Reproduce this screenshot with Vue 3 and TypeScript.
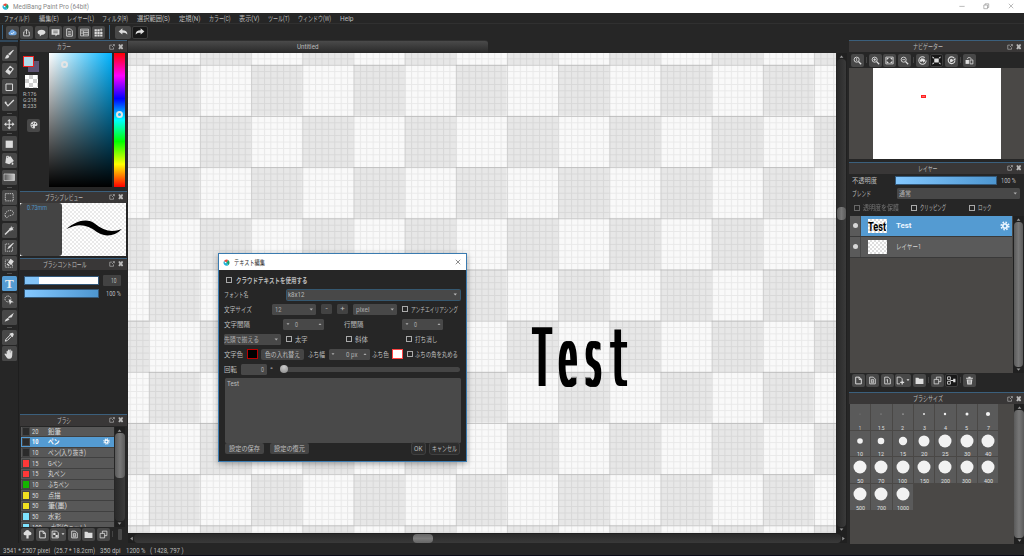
<script setup lang="ts">
import { h } from 'vue'

/* Text fitted to a given width, as in the condensed UI face of the program */
const Lab = (p: { t: string; w: number | string; s?: number | string; b?: boolean | string }) => {
  const s = Number(p.s ?? 7.4)
  const bold = p.b === '' || p.b === true
  return h('svg', { width: p.w, height: 9, style: 'overflow:visible;display:block;flex:none' }, [
    h('text', {
      x: 0, y: 4.5 + s * 0.37, 'font-size': s, 'font-weight': bold ? 700 : 400, fill: 'currentColor',
      textLength: p.w, lengthAdjust: 'spacingAndGlyphs',
    }, p.t),
  ])
}
Lab.props = ['t', 'w', 's', 'b']

const S = 'fill="none" stroke="currentColor"'
const icons: Record<string, string> = {
  cloud: '<path fill="#6fa5e0" d="M4 13a3.500 3.500 0 0 1-.5-6.900 4.500 4.500 0 0 1 8.500-.6A3.800 3.800 0 0 1 12.500 13z"/><path d="M5.500 9l2 2 3.500-4" fill="none" stroke="#fff" stroke-width="1.500"/>',
  share: `<path ${S} stroke-width="1.500" d="M5 7H3v7h10V7h-2M8 11V2M5 5l3-3 3 3"/>`,
  bubble: '<path d="M8 3c4 0 7 1.800 7 4.400S12 12 8.500 12L5 15v-3.500C2.500 11 1 9.500 1 7.500 1 4.800 4 3 8 3z"/>',
  chat: '<path d="M1 2h14v10h-4l-3 3v-3H1z"/><path d="M4 5.500h8M4 8.500h8" stroke="#444" stroke-width="1.200"/>',
  doc: `<path ${S} stroke-width="1.600" d="M3 1.500h6.500L13 5v9.500H3z"/><path ${S} stroke-width="1.300" d="M5.500 6.500h5M5.500 9h5M5.500 11.500h5"/>`,
  list: `<path ${S} stroke-width="1.300" d="M1 2h14v3H1zM6 5v9M6 8h9M6 11h9M1 5v9h14V5M1 9h5"/>`,
  grid: '<path d="M1 2h4v4H1zM6 2h4v4H6zM1 7h4v4H1zM6 7h4v4H6zM11 7h4v4h-4zM1 12h4v3H1zM6 12h4v3H6zM11 12h4v3h-4zM12 1h1.500v1.700H15v1.500h-1.500V6H12V4.200h-1.500V2.700H12z"/>',
  undo: '<path d="M1 7l6-5v3c5 0 8 2 8 7-2-2.500-4-3-8-3v3z"/>',
  redo: '<path d="M15 7L9 2v3c-5 0-8 2-8 7 2-2.500 4-3 8-3v3z"/>',
  brush: '<path d="M14 1l1 1-6 8-3-2.500zM5.500 8.500l2.500 2.200C8 14 5 15 1 14c2-.8 1.500-4.500 4.500-5.500z"/>',
  eraser: `<path d="M9.500 2l4.500 4-6 8-5-4z" ${S} stroke-width="1.700" stroke-linejoin="round"/><path d="M6 6l5 4.500L8 14l-5-4z"/>`,
  rect: `<path ${S} stroke-width="1.500" d="M3 3h10v10H3z"/>`,
  check: `<path ${S} stroke-width="2" d="M2 7l4 5 9-9"/><circle cx="2.500" cy="7" r="1.500"/>`,
  move: `<path ${S} stroke-width="1.700" d="M8 2v12M2 8h12"/><path d="M8 0l3 3.500H5zM8 16l3-3.500H5zM0 8l3.500-3v6zM16 8l-3.500-3v6z"/>`,
  fill: '<path d="M2.500 2.500h11v11h-11z"/>',
  bucket: '<path d="M3 5l7-3 5 7-7 5-6-2zM13 11c2 1 2 4 0 4s-2-2 0-4z"/><path d="M4 6V2h3v3" fill="none" stroke="currentColor" stroke-width="1.500"/>',
  grad: '<defs><linearGradient id="gt"><stop stop-color="#555"/><stop offset="1" stop-color="#ccc"/></linearGradient></defs><path fill="url(#gt)" stroke="#ddd" d="M0 3h16v10H0z"/>',
  sel: `<path ${S} stroke-width="1.300" stroke-dasharray="2 1.300" d="M2 2.500h12v11H2z"/>`,
  lasso: `<path ${S} stroke-width="1.200" stroke-dasharray="2 1.200" d="M2 11c-2-4 2-8 7-9 5 0 7 4 4 7-3 2-5 0-7 3-2 2-3 1-4-1z"/>`,
  wand: `<path ${S} stroke-width="2.200" d="M1.500 14.500L10 6"/><path d="M11 1l1 3 3-1-2 3 2 2-3-.3L10 10 9.500 7 7 6l3-2z"/>`,
  selpen: `<path ${S} stroke-width="1.200" stroke-dasharray="2 1.200" d="M13 8v6H2V3h7"/><path d="M14 1l1 1-6 7-4 2 2-4z"/>`,
  selera: `<path ${S} stroke-width="1.200" stroke-dasharray="2 1.200" d="M13 10v4H2V3h5"/><path d="M10 1l5 4-4 6-5-4zM5 8l4 3-2 1-3-2z"/>`,
  obj: `<circle ${S} stroke-width="1.300" stroke-dasharray="2 1" cx="6" cy="6" r="4.500"/><path d="M7 6l8 5-4 .5L9 15z"/>`,
  knife: '<path d="M15 1l-3 7-5 1-1-1zM5.500 9l3 1.500-2 2L1 15l1.500-3.500z"/>',
  drop: `<path ${S} stroke-width="1.500" d="M9.500 4.500L3 11l-1 3 3-1 6.500-6.500"/><path d="M8 3l5 5 1-2 1-3-2-2-3 1z"/>`,
  hand: '<path d="M4 8V3.500c0-1.300 1.700-1.300 1.800 0L6 7V2c0-1.400 1.900-1.400 2 0v5l.3-5.500c.1-1.300 1.900-1.200 1.900 0V7l.8-4c.3-1.200 1.900-.9 1.800.3L12.500 10c-.2 3-1.500 5-4 5S4.500 14 3.500 12L1 8.500C.5 7.300 2 6.500 2.800 7.500z"/>',
  palette: '<path fill-rule="evenodd" d="M8 1c4 0 7 3 7 6s-2 3-4 3-1 2-1 3-1 2-2 2c-4 0-7-3-7-7s3-7 7-7zM4 6a1.300 1.300 0 1 0 .1 0zM7 3a1.300 1.300 0 1 0 .1 0zM11 4a1.300 1.300 0 1 0 .1 0zM4.500 10a1.300 1.300 0 1 0 .1 0z"/>',
  pop: `<path ${S} stroke-width="1.700" d="M8 3H2v11h10V9M8 8l6-6M10 1.500h4.500V6"/>`,
  close: '<path d="M1 3l2-2h3l2 3 2-3h3l2 2-3 5 3 5-2 2h-3l-2-3-2 3H3l-2-2 3-5z"/>',
  x: `<path ${S} stroke-width="1.500" d="M2 2l12 12M14 2L2 14"/>`,
  restore: `<path ${S} stroke-width="1.500" d="M2 5h9v9H2zM5 5V2h9v9h-3"/>`,
  min: `<path ${S} stroke-width="1.500" d="M1 9h14"/>`,
  gear: `<path fill-rule="evenodd" d="M8 3a5 5 0 1 0 .1 0zm0 3a2 2 0 1 1-.1 0z"/><circle ${S} cx="8" cy="8" r="6" stroke-width="2.600" stroke-dasharray="2.500 2.212"/>`,
  zoom1: `<circle ${S} cx="6.500" cy="6.500" r="4.500" stroke-width="1.600"/><path ${S} stroke-width="2.400" d="M10 10l4.500 4.500"/><path ${S} stroke-width="1.300" d="M5.500 5l1-1v5"/>`,
  zin: `<circle ${S} cx="6.500" cy="6.500" r="4.500" stroke-width="1.600"/><path ${S} stroke-width="2.400" d="M10 10l4.500 4.500"/><path ${S} stroke-width="1.500" d="M4 6.500h5M6.500 4v5"/>`,
  zout: `<circle ${S} cx="6.500" cy="6.500" r="4.500" stroke-width="1.600"/><path ${S} stroke-width="2.400" d="M10 10l4.500 4.500"/><path ${S} stroke-width="1.500" d="M4 6.500h5"/>`,
  fit: `<path ${S} stroke-width="1.500" d="M1.500 2h13v12h-13z"/><path d="M3 3.500h4l-4 4zM13 3.500H9l4 4zM3 12.500h4l-4-4zM13 12.500H9l4-4z"/>`,
  rotl: `<circle ${S} cx="8" cy="8" r="6.500" stroke-width="1.800" stroke-dasharray="34 7"/><path d="M3 8l3-4 5 1 2 3-3 4-2-3-3 2z"/>`,
  reset: '<path d="M4 4.500h8v7H4zM0 1l4 1.500L2 5zM16 1l-4 1.500L14 5zM0 15l4-1.500L2 11zM16 15l-4-1.500 2-2.500z"/>',
  rotr: `<path ${S} stroke-width="2" d="M13 4a6 6 0 1 0 1 5"/><path d="M15 3v5h-5zM5 6l4-1 2 4-5 3z"/>`,
  flip: `<path d="M1 7h6v7H1z"/><path ${S} stroke-width="1.500" d="M9 7h5v7H9zM4 5c0-3 7-3 7 0"/>`,
  page: `<path ${S} stroke-width="1.700" d="M3 2h6.500L13 5.500V14H3zM9 2v4h4"/>`,
  page8: `<path ${S} stroke-width="1.500" d="M3 2h6.500L13 5.500V14H3z"/><path ${S} stroke-width="1.300" d="M6 6h4v6H6zM6 9h4"/>`,
  page1: `<path ${S} stroke-width="1.500" d="M3 2h6.500L13 5.500V14H3z"/><path ${S} stroke-width="1.500" d="M6 7l2-1v6"/>`,
  pageadd: `<path ${S} stroke-width="1.500" d="M7 14H2V2h6l3 3v3"/><path ${S} stroke-width="2.200" d="M11 8v7M7.500 11.500h7"/>`,
  pagebr: `<path ${S} stroke-width="1.500" d="M2 2h8l3 3v9H2z"/><path d="M4 5h4v4H4zM8 9h4v4H8z"/>`,
  folder: '<path d="M1 3h5l1.500 2H15v9H1z"/>',
  copy: `<path ${S} stroke-width="1.400" d="M2 6h8v8H2zM6 6V2h8v8h-4"/>`,
  merge: `<path ${S} stroke-width="1.500" d="M1 1.500h5v5H1zM1 9.500h5v5H1z"/><path d="M6 7h5V5h4v6h-4V9H6z"/>`,
  trash: '<path d="M2 3h4V1.500h4V3h4v2H2zM3 6h10l-1 9H4z"/><path d="M6 7.500v6M8 7.500v6M10 7.500v6" stroke="#555" stroke-width=".8"/>',
  upload: '<path d="M4 9.500a3.300 3.300 0 0 1-.5-6.500A4.500 4.500 0 0 1 12 3a3.300 3.300 0 0 1 .5 6.500zM8 4l4.500 5H10v6H6V9H3.500z"/>',
  tri: '<path d="M2 5h12l-6 7z"/>',
  triu: '<path d="M2 12h12L8 5z"/>',
  tril: '<path d="M12 2v12L4 8z"/>',
  trir: '<path d="M4 2v12l8-6z"/>',
  logo: '<path fill="#e94b3c" d="M8 1a7 7 0 0 1 4 1L8 8 2 5a7 7 0 0 1 6-4z"/><path fill="#18a06c" d="M12 2c4 3 4 9 0 12L8 8z"/><path fill="#21b2d8" d="M12 14c-5 3-11 0-11-6l1-3 6 3z"/><circle cx="5.500" cy="8" r="1.500" fill="#fff"/>',
}
const Ico = (p: { n: string; s?: number | string }) =>
  h('svg', { width: p.s ?? 9, height: p.s ?? 9, viewBox: '0 0 16 16', fill: 'currentColor', style: 'display:block;flex:none;overflow:visible', innerHTML: icons[p.n] })
Ico.props = ['n', 's']

const Head = (p: { t: string; w: number }) =>
  h('div', { class: 'head' }, [h('div', { class: 'head-t' }, [h(Lab, { t: p.t, w: p.w })]), h(Ico, { n: 'pop', s: 6 }), h(Ico, { n: 'close', s: 5.5 })])
Head.props = ['t', 'w']

const menu: [string, number][] = [['ファイル(F)', 25.5], ['編集(E)', 20], ['レイヤー(L)', 27], ['フィルタ(R)', 26], ['選択範囲(S)', 33], ['定規(N)', 21.5], ['カラー(C)', 21.5], ['表示(V)', 20.5], ['ツール(T)', 21.5], ['ウィンドウ(W)', 33], ['Help', 13.5]]
const top = ['cloud', 'share', 'bubble', 'chat', 'doc', 'list', 'grid']
const tools = ['brush', 'eraser', 'rect', 'check', '', 'move', '', 'fill', 'bucket', 'grad', '', 'sel', 'lasso', 'wand', 'selpen', 'selera', '', 'T', 'obj', 'knife', '', 'drop', 'hand']
const brushes: [string, string, string, number][] = [
  ['#2b2b2b', '20', '鉛筆', 13], ['#2b2b2b', '10', 'ペン', 11.5], ['#2b2b2b', '10', 'ペン(入り抜き)', 38], ['#ff3838', '15', 'Gペン', 14.5],
  ['#ff3838', '15', '丸ペン', 17.5], ['#14b400', '10', 'ふちペン', 21], ['#f0e020', '50', '点描', 12.5], ['#f0e020', '50', '筆(墨)', 19],
  ['#7de3ff', '50', '水彩', 13], ['#7de3ff', '100', '水彩(ウェット)', 35],
]
/* label, dot diameter, label width */
const sizes: [string, number, number][] = [['1', 0.5, 2], ['1.5', 0.8, 6.5], ['2', 1.2, 3], ['3', 1.9, 3], ['4', 2.4, 3], ['5', 3, 3], ['7', 4.2, 3],
  ['10', 5.6, 6], ['12', 6.6, 6], ['15', 8.4, 6], ['20', 11, 6.5], ['25', 13, 6.5], ['30', 13, 6.5], ['40', 13, 6.5],
  ['50', 13, 6.5], ['70', 13, 6.5], ['100', 13, 9], ['150', 13, 9], ['200', 13, 9], ['300', 13, 9], ['400', 13, 9],
  ['500', 13, 9], ['700', 13, 9], ['1000', 13, 12]]
</script>

<template>
  <div class="app">
    <header class="title">
      <Ico n="logo" s="7" /><Lab t="MediBang Paint Pro (64bit)" w="76" s="7.200" />
      <div class="winbtns"><Ico n="min" s="6" /><Ico n="restore" s="6.500" /><Ico n="x" s="6" /></div>
    </header>
    <nav class="menu"><div v-for="m in menu" :key="m[0]"><Lab :t="m[0]" :w="m[1]" /></div></nav>
    <div class="toolbar">
      <i class="grip" />
      <div v-for="n in top" :key="n" class="btn"><Ico :n="n" /></div>
      <i class="grip second" />
      <div class="btn wide"><Ico n="undo" s="10" /></div>
      <div class="btn wide dark"><Ico n="redo" s="10" /></div>
    </div>

    <main>
      <aside class="tools">
        <template v-for="(n, i) in tools" :key="i">
          <div v-if="n" class="slot"><div class="tool" :class="{ on: n === 'T' }"><span v-if="n === 'T'" class="tee">T</span><Ico v-else :n="n" s="10.500" /></div></div>
          <div v-else class="tsep"><i /></div>
        </template>
      </aside>

      <aside class="left">
        <section class="p-color">
          <Head t="カラー" :w="14" />
          <div class="color">
            <div class="swcol">
              <div class="swatches"><i class="bg" /><i class="fg" /></div>
              <i class="alpha" />
              <div class="rgb"><Lab t="R:176" w="13.500" s="5" /><Lab t="G:218" w="13.500" s="5" /><Lab t="B:233" w="13.500" s="5" /></div>
              <div class="btn pal"><Ico n="palette" s="8" /></div>
            </div>
            <div class="sv"><i class="ring" /></div>
            <div class="hue"><i class="ring" /></div>
          </div>
        </section>
        <section class="p-prev">
          <Head t="ブラシプレビュー" :w="38" />
          <div class="prev">
            <div class="mm"><Lab t="0.73mm" w="20" s="6.500" /></div>
            <svg class="stroke" width="64" height="53" viewBox="0 0 64 53"><path d="M4.500 26C14 18 24 15 32 20C42 28 50 30 60 26C52 34 43 34 35 29C25 21 16 20 4.500 26Z" /></svg>
          </div>
        </section>
        <section class="p-ctl">
          <Head t="ブラシコントロール" :w="43.500" />
          <div class="ctl"><div class="bar white"><i /></div><div class="val"><Lab t="10" w="5.500" s="6.500" /></div></div>
          <div class="ctl second"><div class="bar" /><Lab t="100 %" w="15" s="6.500" /></div>
        </section>
        <section class="p-brush">
          <Head t="ブラシ" :w="14" />
          <div class="blist">
            <div class="rows">
              <div v-for="(b, i) in brushes" :key="i" class="brow" :class="{ on: i === 1 }">
                <i :style="{ background: b[0] }" /><Lab :t="b[1]" :w="b[1].length * 3.200" s="6.800" :b="i === 1" />
                <div class="bname"><Lab :t="b[2]" :w="b[3]" :b="i === 1" /></div><Ico v-if="i === 1" n="gear" s="7" class="g" />
              </div>
            </div>
            <div class="vs"><Ico n="triu" s="5" /><div class="trk"><i class="th b" /></div><Ico n="tri" s="5" /></div>
          </div>
          <div class="bbtns">
            <div class="btn"><Ico n="upload" /></div><div class="btn"><Ico n="page" /></div><div class="btn wd"><Ico n="pagebr" /><Ico n="tri" s="4" /></div>
            <div class="btn"><Ico n="page8" /></div><div class="btn"><Ico n="folder" /></div><div class="btn"><Ico n="copy" /></div><i class="sp" /><i class="stub" />
          </div>
        </section>
      </aside>

      <section class="work">
        <div class="tab"><Lab t="Untitled" w="21.500" s="7" /></div>
        <div class="mid">
          <div class="canvas">
            <svg width="708" height="481">
              <defs>
                <pattern id="chk" x="20.800" y="11.800" width="102.340" height="102.340" patternUnits="userSpaceOnUse">
                  <rect width="102.340" height="102.340" fill="#f9f9f9" /><rect width="51.170" height="51.170" fill="#e7e7e7" /><rect x="51.170" y="51.170" width="51.170" height="51.170" fill="#e7e7e7" />
                </pattern>
                <pattern id="fine" x="20.800" y="11.800" width="6.396" height="6.396" patternUnits="userSpaceOnUse"><path d="M0 .5H6.396M.5 0V6.396" stroke="#000" stroke-opacity=".065" stroke-width="1" /></pattern>
                <pattern id="major" x="20.800" y="11.800" width="51.170" height="51.170" patternUnits="userSpaceOnUse"><path d="M0 .3H51.170" stroke="#000" stroke-opacity=".17" stroke-width=".9" /><path d="M.3 0V51.170" stroke="#000" stroke-opacity=".08" stroke-width=".8" /></pattern>
                <filter id="widen" x="-5%" y="-5%" width="110%" height="110%"><feMorphology operator="dilate" radius="1.500 0" /></filter>
              </defs>
              <rect width="708" height="481" fill="url(#chk)" /><rect width="708" height="481" fill="url(#fine)" /><rect width="708" height="481" fill="url(#major)" />
              <g filter="url(#widen)"><text transform="translate(0 332.500) scale(.37 1)" x="1095.500 1164.900 1234.100 1303.200" font-size="79.500" class="art">Test</text></g>
            </svg>
          </div>
          <div class="vs wv"><Ico n="triu" s="5" /><div class="trk"><i class="th" /></div><Ico n="tri" s="5" /></div>
        </div>
        <div class="hs"><Ico n="tril" s="5" /><div class="htrk"><i /></div><Ico n="trir" s="5" /></div>
      </section>

      <aside class="right">
        <section class="p-nav">
          <Head t="ナビゲーター" :w="30" />
          <div class="navb">
            <div class="btn"><Ico n="zoom1" /></div><i class="sp" /><div class="btn"><Ico n="zin" /></div><div class="btn"><Ico n="fit" /></div><div class="btn"><Ico n="zout" /></div><i class="sp" />
            <div class="btn"><Ico n="rotl" /></div><div class="btn dark"><Ico n="reset" /></div><div class="btn"><Ico n="rotr" /></div><i class="sp" /><div class="btn"><Ico n="flip" /></div>
          </div>
          <div class="view"><div class="sheet"><i /></div></div>
        </section>
        <section class="p-layer">
          <Head t="レイヤー" :w="19.500" />
          <div class="lr op"><Lab t="不透明度" w="25" /><div class="bar" /><Lab t="100 %" w="15" s="6.500" /></div>
          <div class="lr bl"><Lab t="ブレンド" w="19" /><div class="field"><Lab t="通常" w="12" /><Ico n="tri" s="4.500" /></div></div>
          <div class="lr ck"><i class="cb dim" /><Lab t="透明度を保護" w="36" class="dim" /><i class="cb" /><Lab t="クリッピング" w="26" /><i class="cb last" /><Lab t="ロック" w="13.500" /></div>
          <div class="llist">
            <div class="lrows">
              <div class="lrow on"><div class="eye"><i /></div><div class="lbody"><div class="thumb"><Lab t="Test" w="18" s="13.500" b /></div><Lab t="Test" w="15.500" s="7" b /><Ico n="gear" s="10" class="g" /></div></div>
              <div class="lrow"><div class="eye"><i /></div><div class="lbody"><div class="thumb" /><Lab t="レイヤー1" w="25" /></div></div>
            </div>
            <div class="vs"><Ico n="triu" s="5" /><div class="trk"><i class="th full" /></div><Ico n="tri" s="5" /></div>
          </div>
          <div class="navb lb">
            <div class="btn"><Ico n="page" /></div><div class="btn"><Ico n="page8" /></div><div class="btn"><Ico n="page1" /></div><div class="btn wd"><Ico n="pageadd" /><Ico n="tri" s="4" /></div><div class="btn"><Ico n="folder" /></div><i class="sp" />
            <div class="btn"><Ico n="copy" /></div><div class="btn dark"><Ico n="merge" /></div><i class="sp" /><div class="btn"><Ico n="trash" /></div>
          </div>
        </section>
        <section class="p-size">
          <Head t="ブラシサイズ" :w="30" />
          <div class="sbody">
            <div class="sgrid"><div v-for="s in sizes" :key="s[0]" class="cell"><svg class="dot" width="20" height="14"><circle cx="10" cy="7" :r="s[1] / 2" fill="#f2f2f2" /></svg><Lab :t="s[0]" :w="s[2]" s="5.800" /></div></div>
            <div class="vs"><Ico n="triu" s="5" /><div class="trk"><i class="th full" /></div><Ico n="tri" s="5" /></div>
          </div>
        </section>
      </aside>
    </main>
    <footer class="status"><div><Lab t="3541 * 2507 pixel" w="47" s="7" /></div><div><Lab t="(25.7 * 18.2cm)" w="41" s="7" /></div><div><Lab t="350 dpi" w="20.500" s="7" /></div><div><Lab t="1200 %" w="19.500" s="7" /></div><div><Lab t="( 1428, 797 )" w="33.500" s="7" /></div></footer>
    <div class="task"><i /></div>

    <div class="dialog">
      <div class="dt"><Ico n="logo" s="7" /><Lab t="テキスト編集" w="31" /><Ico n="x" s="6" class="dx" /></div>
      <div class="r r1"><i class="cb" /><Lab t="クラウドテキストを使用する" w="71.500" b /></div>
      <div class="r r2"><Lab t="フォント名" w="24.500" /><div class="field focus"><Lab t="k8x12" w="16.500" s="7" /><Ico n="tri" s="4.500" /></div></div>
      <div class="r r3"><Lab t="文字サイズ" w="28" /><div class="field f44"><Lab t="12" w="6.500" s="7" /><Ico n="tri" s="4.500" /></div><div class="pb">-</div><div class="pb">+</div><div class="field f44"><Lab t="pixel" w="13.500" s="7" /><Ico n="tri" s="4.500" /></div><i class="cb" /><Lab t="アンチエイリアシング" w="47" /></div>
      <div class="r r4"><Lab t="文字間隔" w="26" /><div class="field spin"><Ico n="tri" s="4" /><Lab t="0" w="3" s="6.500" /><Ico n="triu" s="4" /></div><Lab t="行間隔" w="19.500" /><div class="field spin"><Ico n="tri" s="4" /><Lab t="0" w="3" s="6.500" /><Ico n="triu" s="4" /></div></div>
      <div class="r r5"><div class="field f56"><Lab t="先頭で揃える" w="35" /><Ico n="tri" s="4.500" /></div><i class="cb" /><Lab t="太字" w="12.500" /><i class="cb" /><Lab t="斜体" w="13" /><i class="cb" /><Lab t="打ち消し" w="22.500" /></div>
      <div class="r r6"><Lab t="文字色" w="19" /><i class="sw" /><div class="db"><Lab t="色の入れ替え" w="35" /></div><Lab t="ふち幅" w="17" /><div class="field spin px"><Ico n="tri" s="4" /><Lab t="0 px" w="11.500" s="6.500" class="num" /><Ico n="triu" s="4" /></div><Lab t="ふち色" w="17" /><i class="sw wh" /><i class="cb" /><Lab t="ふちの角を丸める" w="43" /></div>
      <div class="r r7"><Lab t="回転" w="13" /><div class="field rot"><Lab t="0" w="3" s="6.500" /></div><Lab t="°" w="3" /><div class="slide"><i /></div></div>
      <div class="ta"><Lab t="Test" w="12" s="7" /></div>
      <div class="df"><div class="db"><Lab t="設定の保存" w="31" /></div><div class="db"><Lab t="設定の復元" w="31" /></div><span /><div class="db ob"><Lab t="OK" w="8.500" s="7" /></div><div class="db ob"><Lab t="キャンセル" w="25" /></div></div>
    </div>
  </div>
</template>

<style>
body { background: #262626; overflow: hidden; }
.head { flex: none; display: flex; align-items: center; background: #393737; border-top: 1.500px solid #3b5f7c; padding: 0 3px 0 2.500px; box-sizing: border-box; height: 12px; gap: 3px; color: #b9b9b9; }
.head-t { flex: 1; display: flex; justify-content: center; }
</style>

<style scoped>
.app { position: relative; width: 1024px; height: 556px; overflow: hidden; background: #262626; color: #bcbcbc; font-family: Roboto, "Noto Sans CJK JP", sans-serif; display: flex; flex-direction: column; }
.app * { box-sizing: border-box; }
i { display: block; flex: none; }
.title { height: 12.500px; background: #fff; color: #888; display: flex; align-items: center; gap: 4px; padding-left: 2px; flex: none; }
.winbtns { margin-left: auto; display: flex; gap: 18px; padding-right: 10.500px; align-items: center; }
.menu { height: 11.500px; flex: none; padding: 1px 0 0 4px; display: grid; align-items: center; grid-template-columns: 34.500px 28.500px 35px 35px 42px 30px 30px 29px 30px 41.500px 20px; border-bottom: 1px solid #303030; }
.toolbar { height: 16px; flex: none; display: flex; align-items: center; gap: 1.400px; padding-left: 1.500px; }
.grip { width: 1px; height: 14px; background: #3b5f7c; margin-right: 2px; }
.grip.second { margin: 0 3.500px 0 2.500px; }
.btn { width: 13px; height: 13px; border-radius: 2px; background: #484848; color: #dedede; display: flex; align-items: center; justify-content: center; flex: none; }
.btn.wide { width: 16px; }
.btn.dark { background: #181818; border: 1px solid #3d3d3d; }
.btn.wd { width: 16px; gap: 1px; }
main { height: 503px; flex: none; display: flex; }
.tools { width: 18px; padding: 3.500px 0 0 2px; border-top: 2px solid #30475a; }
.slot { height: 16.600px; display: flex; align-items: center; }
.tool { width: 14.500px; height: 15px; border-radius: 1.500px; background: #474747; color: #dcdcdc; display: flex; align-items: center; justify-content: center; }
.tool.on { background: #549bd2; }
.tee { font: 700 13px/14px "Liberation Serif", serif; color: #eee; }
.tsep { height: 3.600px; display: flex; align-items: center; padding-left: 5px; }
.tsep i { width: 5px; height: 1px; background: #505050; }
.left { width: 109.500px; padding-left: .8px; padding-right: 1.500px; display: flex; flex-direction: column; border-left: 1px solid #1e1e1e; }
.left .head { width: 107px; }
.p-color { height: 150.500px; flex: none; }
.color { display: flex; height: 135px; padding-top: 1px; }
.swcol { width: 29px; padding: 2.500px 0 0 3.500px; }
.swatches { display: grid; height: 19.500px; }
.swatches i { width: 11px; height: 11px; grid-area: 1/1; }
.fg { background: #b0dae9; border: 1.300px solid #f02020; }
.bg { background: #5f5575; margin: 5px 0 0 5px; }
.alpha { width: 13px; height: 13px; margin-left: 1.500px; background: repeating-conic-gradient(#cfcfcf 0 25%, #fff 0 50%) 0 0/8px 8px; }
.rgb { padding-top: 1.500px; height: 29px; }
.rgb svg { height: 6px; }
.pal { margin: 1.500px 0 0 4px; }
.sv { width: 63px; height: 134px; background: linear-gradient(transparent, #000), linear-gradient(90deg, #fff, #00b4ff); position: relative; }
.ring { position: absolute; width: 7px; height: 7px; border: 2px solid #e4e4e4; border-radius: 50%; }
.sv .ring { left: 12px; top: 8px; }
.hue { position: relative; width: 11px; margin-left: 2px; height: 134px; background: linear-gradient(#f00, #f0f 17%, #00f 34%, #0ff 50%, #0f0 66%, #ff0 83%, #f00); }
.hue .ring { left: 2px; top: 57.500px; }
.p-prev { height: 67px; flex: none; }
.prev { height: 53.500px; display: flex; background: repeating-conic-gradient(#e9e9e9 0 25%, #fff 0 50%) 0 0/4px 4px; }
.mm { width: 42.500px; height: 53px; background: #444; border-radius: 3px; color: #4f93c5; padding: 0 0 0 7px; }
.p-ctl { height: 156px; flex: none; }
.ctl { display: flex; align-items: center; height: 13px; margin: 4.500px 0 0 4.500px; }
.ctl.second { margin-top: 0; }
.bar { width: 75px; height: 8.500px; border: 1px solid #34597a; background: linear-gradient(90deg, #84c8ff, #4d96d0); }
.bar.white { background: #fff; }
.bar i { width: 14px; height: 6.500px; background: #84c5f8; }
.val { width: 18px; height: 11px; background: #424242; margin-left: 3.500px; border-radius: 1px; display: flex; align-items: center; justify-content: flex-end; padding-right: 4px; }
.ctl.second .bar { margin-right: 7px; }
.blist { display: flex; height: 100px; padding-left: 1px; margin-top: 1px; }
.rows { width: 93px; overflow: hidden; }
.brow { height: 10.670px; background: #585858; border-bottom: .8px solid #404040; display: flex; align-items: center; padding-left: 1px; color: #dadada; }
.brow > i { width: 8px; height: 8.500px; margin-right: 2.500px; border: .5px solid #444; }
.brow.on { background: #549bd2; color: #fff; }
.bname { width: 56px; margin-left: 9.500px; }
.brow .g { margin-left: -1px; }
.vs { width: 10px; background: #202020; display: flex; flex-direction: column; align-items: center; color: #999; margin-left: 1px; padding: 1px 0; flex: none; }
.trk { flex: 1; width: 9.500px; background: linear-gradient(90deg, #2a2a2a, #3a3a3a); border-radius: 4px; }
.th { width: 9.500px; height: 13px; border-radius: 4px; background: linear-gradient(90deg, #5a5a5a, #777, #5a5a5a); }
.th.b { height: 45px; }
.th.full { height: 100%; }
.bbtns { display: flex; gap: 1.500px; padding: 1px 0 0 1.500px; align-items: center; }
.sp { width: 1px; height: 6px; background: #444; margin: 0 .5px; }
.stub { width: 4px; height: 11px; background: #484848; margin-left: 3px; border-radius: 1px; }
.work { width: 721.500px; flex: none; display: flex; flex-direction: column; }
.tab { width: 360px; height: 12.500px; background: linear-gradient(#4a4a4a, #292929); display: flex; align-items: center; justify-content: center; border-radius: 0 3px 0 0; flex: none; border-top: 1px solid #303030; margin-left: .5px; }
.mid { height: 480.500px; display: flex; }
.canvas { width: 708px; overflow: hidden; padding-left: .5px; }
.canvas svg { display: block; }
.art { font-family: "DejaVu Sans Mono", monospace; fill: #000; }
.wv .th { margin-top: 148px; }
.hs { width: 719px; height: 10px; display: flex; align-items: center; color: #999; padding: 0 1px; background: #202020; }
.htrk { flex: 1; height: 9px; background: linear-gradient(#292929, #3a3a3a); border-radius: 4px; }
.htrk i { width: 20px; height: 9px; border-radius: 4px; background: linear-gradient(#666, #7c7c7c, #666); margin-left: 279px; }
.right { width: 175px; flex: none; }
.navb { height: 16px; display: flex; gap: 1.500px; align-items: center; padding: 0 0 0 1.500px; }
.p-nav { height: 121.500px; }
.view { height: 91px; background: #4a4846; padding-left: 23.500px; }
.sheet { width: 128px; height: 91px; background: #fff; padding: 27px 0 0 48.500px; }
.sheet i { width: 4.500px; height: 3px; border: 1px solid #f22; background: #f66; }
.p-layer { height: 230.500px; }
.lr { display: flex; align-items: center; padding-left: 3px; }
.op { height: 14px; }
.op .bar { width: 101.500px; margin: 0 4px 0 18px; }
.bl { height: 12px; }
.bl .field { width: 123px; margin-left: 25.500px; }
.ck { height: 16px; }
.ck .cb { margin: 0 3px 0 12px; }
.ck .cb.dim { margin: 0 3px 0 2px; }
.ck .cb.last { margin-left: 22.500px; }
.dim { opacity: .5; }
.cb { width: 6px; height: 6px; border: 1px solid #a9a9a9; }
.field { height: 11px; background: #484848; border-radius: 1.500px; display: flex; align-items: center; justify-content: space-between; padding: 0 2.500px; color: #aeaeae; }
.llist { height: 157.500px; display: flex; background: #4a4846; margin-left: 1px; }
.lrows { flex: 1; }
.llist .vs { width: 11.500px; }
.lrow { height: 21px; display: flex; border-bottom: 1px solid #393939; background: #5a5a5a; color: #d5d5d5; }
.eye { width: 11px; display: flex; align-items: center; justify-content: center; border-right: 1px solid #484848; }
.eye i { width: 5px; height: 5px; border-radius: 50%; background: #d8d8d8; }
.lbody { flex: 1; display: flex; align-items: center; padding: 0 1.500px 0 7px; }
.on .lbody { background: #549bd2; color: #eaf5ff; }
.thumb { width: 19px; height: 14px; margin-right: 9px; background: repeating-conic-gradient(#dedede 0 25%, #fff 0 50%) 0 0/4px 4px; color: #000; display: flex; align-items: center; }
.lbody .g { margin-left: auto; }
.lb { padding-left: 2.500px; height: 14px; }
.sbody { display: flex; height: 140px; background: #4a4846; margin-left: 1px; }
.sgrid { flex: 1; display: grid; grid-template-columns: repeat(7, 20.330px); gap: 1px; grid-auto-rows: 25.700px; align-content: start; }
.cell { background: #5a5a5a; display: flex; flex-direction: column; align-items: center; color: #e0e0e0; }
.dot { display: block; flex: none; margin: 3px 0 1.500px; }
.status { height: 11.500px; flex: none; display: grid; grid-template-columns: 51px 46px 26px 23.500px 40px; padding: 2.500px 0 0 3px; }
.task { height: 2px; background: #0b0b18; padding: 1px 0 0 236px; }
.task i { width: 25px; height: 1px; background: #77736b; }
.dialog { position: absolute; left: 218px; top: 253px; width: 249px; height: 208.500px; background: #262626; border: 1px solid #3a7bb0; box-shadow: 0 2px 6px rgba(0, 0, 0, .35); }
.dt { height: 16px; background: #fff; display: flex; align-items: center; gap: 4px; padding: 0 5px 0 4px; color: #333; }
.dx { margin-left: auto; }
.r { display: grid; align-items: center; height: 15px; padding-left: 5px; }
.r1 { margin-top: 2.500px; grid-template-columns: 9.500px auto; justify-content: start; padding-left: 7px; }
.r2 { grid-template-columns: 61.500px 175px; height: 14px; }
.focus { border: 1px solid #355870; height: 12px; color: #b9b9b9; padding: 0 2px 0 1px; }
.r3 { grid-template-columns: 48px 49px 16px 16px 49px 9px auto; justify-content: start; }
.r4 { grid-template-columns: 59px 61px 58px 41px; }
.r5 { grid-template-columns: 62px 9px 50.500px 9px 51px 9px auto; justify-content: start; }
.r6 { grid-template-columns: 23px 14px 47px 20.500px 43.500px 20px 14.500px 8.500px auto; justify-content: start; }
.r7 { grid-template-columns: 17px 29px 10px 180px; justify-content: start; }
.f44 { width: 44px; }
.f56 { width: 56.500px; padding-left: 0; }
.pb { width: 11px; height: 10.500px; background: #424242; border-radius: 1.500px; font: 8px/9.500px Roboto, sans-serif; text-align: center; }
.spin { width: 41px; justify-content: flex-start; gap: 5px; }
.spin svg:last-child { margin-left: auto; }
.px .num { margin-left: 5.500px; }
.rot { width: 26px; justify-content: flex-end; padding-right: 3.500px; }
.sw { width: 10.500px; height: 10.500px; background: #000; border: 1px solid #b00; }
.sw.wh { background: #fff; border-color: #f44; }
.db { height: 11px; width: 43px; background: #454545; border-radius: 2px; display: flex; align-items: center; justify-content: center; }
.slide { height: 5px; background: #454545; border-radius: 3px; display: flex; align-items: center; }
.slide i { width: 8px; height: 8px; border-radius: 50%; background: radial-gradient(circle at 50% 25%, #ccc, #888); }
.ta { margin: 1.500px 0 0 5.500px; width: 236px; height: 65px; background: #494949; border-radius: 1.500px; padding: 1px 2px; }
.df { display: grid; grid-template-columns: 45px 40px 101px 18px 31px; padding-left: 6px; align-items: center; height: 13px; margin-top: -1px; }
.df .db { width: 39px; }
.df .ob { width: 15px; height: 13px; background: #2e2e2e; border: 1px solid #404040; border-radius: 3px; }
.df .ob:last-child { width: 31px; }
</style>
